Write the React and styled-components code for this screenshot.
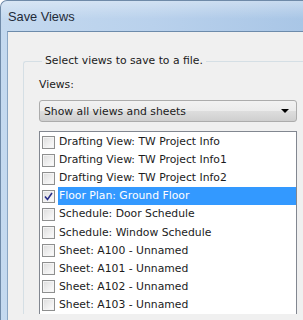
import React from 'react';
import styled, { createGlobalStyle } from 'styled-components';

const Global = createGlobalStyle`
  html, body { margin: 0; padding: 0; background: #fff; }
  body { font-family: "DejaVu Sans", sans-serif; }
`

const Frame = styled.div`
  width: 303px;
  height: 320px;
  overflow: hidden;
  display: flex;
  flex-direction: column;
  background: linear-gradient(90deg, #c4d9ef 0%, #b9d1ec 50%, #a9c6e6 100%);
  border-top-left-radius: 7px;
  border-left: 1px solid #6f8aa8;
  border-top: 1px solid #6f8aa8;
  box-sizing: border-box;
`
const TitleBar = styled.div`
  height: 30px;
  display: flex;
  align-items: center;
  padding-left: 7px;
  font-family: "Liberation Sans", sans-serif;
  font-size: 12.8px;
  color: #1e2a38;
  background: linear-gradient(180deg, rgba(255,255,255,0.35) 0%, rgba(255,255,255,0) 60%);
`
const Body = styled.div`
  flex: 1;
  margin-left: 6px;
  background: #f0f0f0;
  border-top: 1px solid #6d8bab;
  border-left: 1px solid #8aa6c4;
  display: flex;
  flex-direction: column;
  padding: 22px 0 0 15px;
`
const Group = styled.fieldset`
  margin: 0;
  padding: 10px 0 0 15px;
  border: 1px solid #d5dfe5;
  border-right: none;
  border-bottom: none;
  border-radius: 3px 0 0 0;
  font-family: "DejaVu Sans", sans-serif;
  font-size: 10.8px;
  color: #1b1b1b;
  min-width: 0;
`
const Legend = styled.legend`
  padding: 0 3px;
  margin-left: 3px;
  line-height: 14px;
`
const Label = styled.div`
  line-height: 14px;
  margin-bottom: 8px;
`
const Select = styled.div`
  height: 20px;
  margin-right: 6px;
  border: 1px solid #acacac;
  border-radius: 3px;
  background: linear-gradient(180deg, #f2f2f2 0%, #ebebeb 50%, #dddddd 51%, #cfcfcf 100%);
  display: flex;
  align-items: center;
  justify-content: space-between;
  padding: 0 7px 0 4px;
`
const Arrow = styled.span`
  width: 0;
  height: 0;
  border-left: 4px solid transparent;
  border-right: 4px solid transparent;
  border-top: 4px solid #000;
`
const List = styled.div`
  margin-top: 9px;
  margin-right: 6px;
  flex: 1;
  background: #fff;
  border: 1px solid #828790;
  border-bottom: none;
  padding: 1px 0 0 2px;
`
const Row = styled.div`
  display: flex;
  align-items: center;
  height: 18.1px;
`
const Box = styled.span`
  width: 11px;
  height: 11px;
  border: 1px solid #8e8f8f;
  background: linear-gradient(135deg, #dcdcdc 0%, #f4f4f4 70%, #fcfcfc 100%);
  box-shadow: inset 0 0 0 1px #f4f4f4;
  display: flex;
  align-items: center;
  justify-content: center;
  margin-right: 3px;
  flex: none;
`
const Text = styled.span`
  flex: 1;
  height: 18px;
  line-height: 18px;
  padding-left: 1px;
  white-space: nowrap;
  background: ${p => (p.$sel ? '#3399ff' : 'transparent')};
  color: ${p => (p.$sel ? '#fff' : '#1b1b1b')};
`

const rows = [
  ['Drafting View: TW Project Info', false],
  ['Drafting View: TW Project Info1', false],
  ['Drafting View: TW Project Info2', false],
  ['Floor Plan: Ground Floor', true],
  ['Schedule: Door Schedule', false],
  ['Schedule: Window Schedule', false],
  ['Sheet: A100 - Unnamed', false],
  ['Sheet: A101 - Unnamed', false],
  ['Sheet: A102 - Unnamed', false],
  ['Sheet: A103 - Unnamed', false],
]

export default function App() {
  return (
    <Frame>
      <Global />
      <TitleBar>Save Views</TitleBar>
      <Body>
        <Group>
          <Legend>Select views to save to a file.</Legend>
          <Label>Views:</Label>
          <Select>
            <span>Show all views and sheets</span>
            <Arrow />
          </Select>
          <List>
            {rows.map(([t, sel]) => (
              <Row key={t}>
                <Box>
                  {sel && (
                    <svg width="9" height="9" viewBox="0 0 9 9">
                      <path d="M1 4.5 L3.5 7.5 L8 1" fill="none" stroke="#2a2f8a" strokeWidth="1.6" />
                    </svg>
                  )}
                </Box>
                <Text $sel={sel}>{t}</Text>
              </Row>
            ))}
          </List>
        </Group>
      </Body>
    </Frame>
  );
}
